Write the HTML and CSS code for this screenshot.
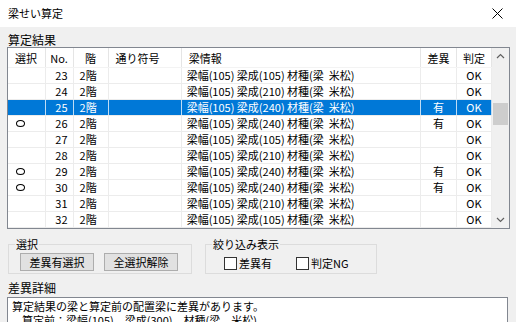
FILE: index.html
```html
<!DOCTYPE html>
<html lang="ja">
<head>
    <meta charset="UTF-8">
    <title>梁せい算定</title>
    <link rel="stylesheet" href="styles.css">
</head>
<body>
    <div class="window">
        <div class="titlebar">
            <span class="title">梁せい算定</span>
            <svg class="close" width="11" height="11" viewBox="0 0 11 11">
                <path d="M0.5 0.5 L10.5 10.5 M10.5 0.5 L0.5 10.5" stroke="#000" stroke-width="1" fill="none"/>
            </svg>
        </div>

        <div class="content">
            <div class="section-label">算定結果</div>

            <div class="grid">
                <div class="grid-body">
                    <table class="result-table">
                        <colgroup>
                            <col class="c-sel"><col class="c-no"><col class="c-floor"><col class="c-axis">
                            <col class="c-info"><col class="c-diff"><col class="c-judge">
                        </colgroup>
                        <thead>
                            <tr>
                                <th class="left">選択</th>
                                <th>No.</th>
                                <th>階</th>
                                <th class="left">通り符号</th>
                                <th class="left">梁情報</th>
                                <th>差異</th>
                                <th>判定</th>
                            </tr>
                        </thead>
                        <tbody>
                            <tr><td></td><td class="num">23</td><td>2階</td><td></td><td class="info">梁幅(105) 梁成(105) 材種(梁  米松)</td><td class="center"></td><td class="center">OK</td></tr>
                            <tr><td></td><td class="num">24</td><td>2階</td><td></td><td class="info">梁幅(105) 梁成(210) 材種(梁  米松)</td><td class="center"></td><td class="center">OK</td></tr>
                            <tr class="selected"><td></td><td class="num">25</td><td>2階</td><td></td><td class="info">梁幅(105) 梁成(240) 材種(梁  米松)</td><td class="center">有</td><td class="center">OK</td></tr>
                            <tr><td class="mark"><span class="circle" title="○"></span></td><td class="num">26</td><td>2階</td><td></td><td class="info">梁幅(105) 梁成(240) 材種(梁  米松)</td><td class="center">有</td><td class="center">OK</td></tr>
                            <tr><td></td><td class="num">27</td><td>2階</td><td></td><td class="info">梁幅(105) 梁成(105) 材種(梁  米松)</td><td class="center"></td><td class="center">OK</td></tr>
                            <tr><td></td><td class="num">28</td><td>2階</td><td></td><td class="info">梁幅(105) 梁成(210) 材種(梁  米松)</td><td class="center"></td><td class="center">OK</td></tr>
                            <tr><td class="mark"><span class="circle" title="○"></span></td><td class="num">29</td><td>2階</td><td></td><td class="info">梁幅(105) 梁成(240) 材種(梁  米松)</td><td class="center">有</td><td class="center">OK</td></tr>
                            <tr><td class="mark"><span class="circle" title="○"></span></td><td class="num">30</td><td>2階</td><td></td><td class="info">梁幅(105) 梁成(240) 材種(梁  米松)</td><td class="center">有</td><td class="center">OK</td></tr>
                            <tr><td></td><td class="num">31</td><td>2階</td><td></td><td class="info">梁幅(105) 梁成(210) 材種(梁  米松)</td><td class="center"></td><td class="center">OK</td></tr>
                            <tr><td></td><td class="num">32</td><td>2階</td><td></td><td class="info">梁幅(105) 梁成(105) 材種(梁  米松)</td><td class="center"></td><td class="center">OK</td></tr>
                        </tbody>
                    </table>
                </div>
                <div class="scrollbar">
                    <svg class="arrow" width="17" height="17" viewBox="0 0 17 17">
                        <path d="M5 10 L8.5 6.5 L12 10" stroke="#606060" stroke-width="1.2" fill="none"/>
                    </svg>
                    <div class="track"><div class="thumb"></div></div>
                    <svg class="arrow" width="17" height="17" viewBox="0 0 17 17">
                        <path d="M5 7 L8.5 10.5 L12 7" stroke="#606060" stroke-width="1.2" fill="none"/>
                    </svg>
                </div>
            </div>

            <div class="controls">
                <fieldset class="group group-select">
                    <legend>選択</legend>
                    <div class="buttons">
                        <button class="btn">差異有選択</button>
                        <button class="btn">全選択解除</button>
                    </div>
                </fieldset>
                <fieldset class="group group-filter">
                    <legend>絞り込み表示</legend>
                    <div class="checks">
                        <label class="check"><span class="box"></span>差異有</label>
                        <label class="check"><span class="box"></span>判定NG</label>
                    </div>
                </fieldset>
            </div>

            <div class="section-label detail-label">差異詳細</div>
            <div class="detail-box">
                <div>算定結果の梁と算定前の配置梁に差異があります。</div>
                <div class="indent">算定前：梁幅(105)　梁成(300)　材種(梁　米松)</div>
            </div>
        </div>
    </div>
</body>
</html>
```

FILE: styles.css
```css
:root {
    --window-bg: #f0f0f0;
    --grid-line: #ececec;
    --border: #adadad;
    --select-blue: #0078d7;
    --text: #000;
}

body {
    margin: 0;
    font-family: "Noto Sans CJK JP", "Noto Sans", sans-serif;
    font-size: 11px;
    color: var(--text);
    background-color: var(--window-bg);
}

.window {
    width: 516px;
    height: 322px;
    overflow: hidden;
    background-color: var(--window-bg);
}

/* Title bar */
.titlebar {
    height: 27px;
    background-color: white;
    display: flex;
    align-items: center;
    justify-content: space-between;
    padding: 0 13px 0 8px;
}

.titlebar .title {
    font-size: 11px;
    margin-top: -1px;
}

/* Content */
.content {
    padding: 0 6px 0 7px;
}

.section-label {
    height: 20px;
    line-height: 25px;
    padding-left: 1px;
    font-size: 12px;
}

/* Result grid */
.grid {
    height: 180px;
    border: 1px solid #828790;
    background-color: white;
    display: flex;
}

.grid-body {
    flex: 1;
    overflow: hidden;
}

.result-table {
    width: 100%;
    table-layout: fixed;
    border-collapse: collapse;
    white-space: pre;
}

.c-sel { width: 37px; }
.c-no { width: 28px; }
.c-floor { width: 35px; }
.c-axis { width: 73px; }
.c-info { width: 239px; }
.c-diff { width: 36px; }
.c-judge { width: 35px; }

.result-table th {
    height: 19px;
    font-weight: normal;
    text-align: center;
    padding: 0;
    border-right: 1px solid #e5e5e5;
    border-bottom: 1px solid #f3f3f3;
}

.result-table th.left {
    text-align: left;
    padding-left: 7px;
}

.result-table td {
    height: 15px;
    padding: 0 0 0 6px;
    line-height: 15px;
    border-right: 1px solid var(--grid-line);
    border-bottom: 1px solid var(--grid-line);
    overflow: hidden;
}

.result-table td.num {
    text-align: right;
    padding: 0 5px 0 0;
}

.result-table td.center {
    text-align: center;
    padding: 0;
}

.result-table td.info {
    padding-left: 5px;
}

.result-table td.mark {
    padding-left: 8px;
}

.circle {
    display: block;
    width: 7px;
    height: 5px;
    border: 1px solid #000;
    border-radius: 50%;
}

.result-table tr.selected td {
    background-color: var(--select-blue);
    color: white;
    border-right-color: #bfdcf4;
}

/* Scrollbar */
.scrollbar {
    width: 17px;
    background-color: var(--window-bg);
    display: flex;
    flex-direction: column;
}

.scrollbar .arrow {
    display: block;
}

.scrollbar .track {
    flex: 1;
    padding: 38px 1px 0 1px;
}

.scrollbar .thumb {
    height: 22px;
    background-color: #cdcdcd;
}

/* Group boxes */
.controls {
    display: flex;
    gap: 13px;
    margin-top: 7px;
    padding-left: 1px;
}

.group {
    margin: 0;
    border: 1px solid #dcdcdc;
    padding: 0 0 6px 0;
}

.group legend {
    padding: 0 1px;
    margin-left: 6px;
    font-size: 11px;
}

.group-select {
    width: 182px;
    height: 30px;
}

.group-filter {
    width: 170px;
    height: 30px;
}

.buttons {
    display: flex;
    gap: 10px;
    padding: 1px 0 0 11px;
}

.btn {
    font-family: inherit;
    font-size: 11px;
    height: 18px;
    width: 74px;
    padding: 0;
    background-color: #e1e1e1;
    border: 1px solid var(--border);
    color: var(--text);
}

.checks {
    display: flex;
    gap: 24px;
    padding: 3px 0 0 18px;
}

.check {
    display: flex;
    align-items: center;
    gap: 2px;
}

.check .box {
    width: 11px;
    height: 11px;
    border: 1px solid #333;
    background-color: white;
}

/* Detail */
.detail-label {
    margin-top: 3px;
    line-height: 21px;
}

.detail-box {
    height: 40px;
    border: 1px solid #828790;
    background-color: white;
    padding: 1px 4px;
    line-height: 14px;
    margin-right: 2px;
}

.detail-box .indent {
    padding-left: 10px;
}
```
